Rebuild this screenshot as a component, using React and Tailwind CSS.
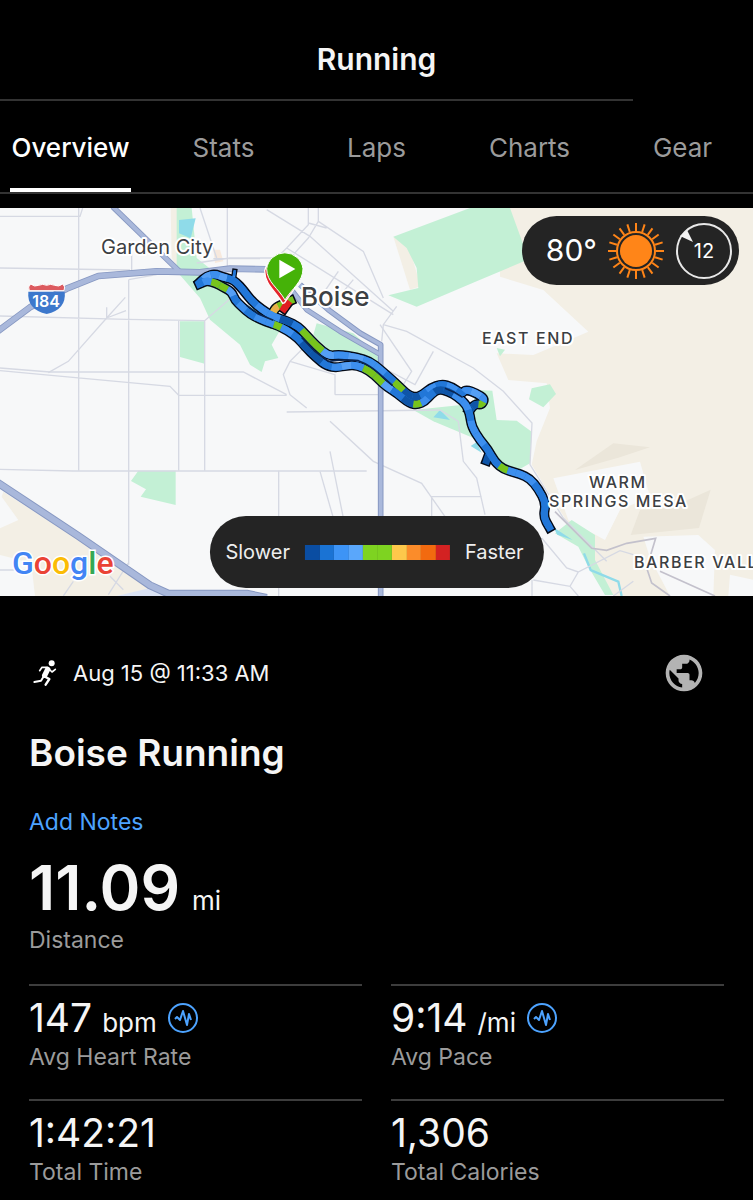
import { MdPublic } from 'react-icons/md';

const TABS = ['Overview', 'Stats', 'Laps', 'Charts', 'Gear'];

const PACE_COLORS = ['#0a4da2', '#1a73d4', '#3d94f6', '#5aa7fb', '#7ed321', '#7ed321', '#fdc84b', '#fb8c2a', '#f26a0f', '#d32222'];

const STATS = [
  { label: 'Avg Heart Rate', value: '147', unit: 'bpm', chart: true },
  { label: 'Avg Pace', value: '9:14', unit: '/mi', chart: true },
  { label: 'Total Time', value: '1:42:21' },
  { label: 'Total Calories', value: '1,306' },
];

const ROUTE_COLORS = { d: '#0f55a8', m: '#2277d8', l: '#3d8fee', s: '#559ff5', g: '#78c41c', y: '#e8b04a', r: '#e02020' };

// one letter per point, keyed to ROUTE_COLORS
const ROUTES = [
  { pace: 'gygg', points: [[814, 325], [825, 300], [845, 290], [872, 278]] },
  { pace: 'rr', points: [[862, 288], [852, 302]] },
  { pace: 'dd', points: [[1466, 742], [1460, 758]] },
  { pace: 'ml', points: [[704, 190], [700, 216]], narrow: true },
  {
    pace: 'mslsmmmmlldmggslsllmgddmlmlmlslgdd',
    points: [
      [600, 222], [620, 204], [645, 198], [670, 208], [692, 213], [708, 222], [730, 246], [755, 279], [785, 304],
      [820, 326], [860, 338], [895, 356], [915, 377], [950, 414], [985, 444], [1020, 440], [1070, 448], [1110, 460], [1140, 484],
      [1170, 510], [1195, 533], [1225, 562], [1250, 568], [1270, 558], [1292, 540], [1325, 528], [1355, 536], [1385, 558], [1397, 544],
      [1430, 556], [1454, 573], [1445, 590], [1425, 588], [1408, 608],
    ],
  },
  {
    pace: 'mlggsmlmllglmddmlslggsmdglmddllmllmmglllmmmm',
    points: [
      [598, 228], [620, 218], [648, 225], [670, 238], [695, 251], [705, 276], [725, 296], [750, 318], [780, 334], [815, 347],
      [828, 351], [860, 366], [895, 391], [915, 416], [950, 450], [980, 474], [1010, 479], [1040, 472], [1070, 471], [1110, 489],
      [1138, 516], [1160, 536], [1190, 555], [1228, 586], [1252, 590], [1275, 580], [1292, 560], [1315, 543], [1345, 550], [1375, 568],
      [1400, 591], [1410, 621], [1415, 656], [1440, 696], [1465, 726], [1485, 763], [1511, 783], [1535, 791], [1560, 798], [1590, 812],
      [1615, 842], [1638, 886], [1630, 926], [1648, 958],
    ],
  },
];

const LABELS = [
  { text: 'Garden City', x: 101, y: 46, size: 20, className: 'font-normal' },
  { text: 'Boise', x: 301, y: 98, size: 26, className: 'font-medium' },
  { text: 'EAST END', x: 482, y: 136, size: 16, className: 'font-medium tracking-widest' },
  { text: 'WARM', x: 589, y: 280, size: 16, className: 'font-medium tracking-widest' },
  { text: 'SPRINGS MESA', x: 549, y: 299, size: 16, className: 'font-medium tracking-widest' },
  { text: 'BARBER VALL', x: 634, y: 360, size: 16, className: 'font-medium tracking-widest' },
];

const mid = (a, b) => [(a[0] + b[0]) / 2, (a[1] + b[1]) / 2];

// rounds each corner: a piece runs between the midpoints on either side of a point
const toPieces = (points) =>
  points.map((point, i) => {
    const start = i === 0 ? point : mid(points[i - 1], point);
    const end = i === points.length - 1 ? point : mid(point, points[i + 1]);
    return { start, curve: `Q${point.join(' ')} ${end.join(' ')}` };
  });

const toPath = (points) => {
  const pieces = toPieces(points);
  return `M${pieces[0].start.join(' ')}` + pieces.map((p) => p.curve).join('');
};

const Route = () => (
  <g fill="none" strokeLinejoin="round">
    {ROUTES.map((route, i) => (
      <path key={i} d={toPath(route.points)} stroke="#050b18" strokeWidth={route.narrow ? 16 : 30} strokeLinecap="square" />
    ))}
    {ROUTES.map((route, i) => (
      <g key={i} strokeWidth={route.narrow ? 8 : 21}>
        <path d={toPath(route.points)} stroke={ROUTE_COLORS[route.pace[0]]} strokeLinecap="square" />
        {toPieces(route.points).map((piece, j) => (
          <path key={j} d={`M${piece.start.join(' ')}${piece.curve}`} stroke={ROUTE_COLORS[route.pace[j]]} />
        ))}
      </g>
    ))}
    <path
      d="M905 388L945 430L985 460Q1030 452 1075 458Q1110 471 1140 499L1178 533M1335 541Q1365 552 1388 568M740 292L775 318L820 337"
      stroke="#0a2550"
      strokeWidth="5"
    />
  </g>
);

const RouteMap = () => (
  <svg viewBox="0 0 753 388" className="block w-full h-auto" role="img" aria-label="Route map">
    <rect width="753" height="388" fill="#f7f8f9" />
    <g transform="scale(0.333333)">
      {/* dry hills */}
      <g fill="#f3efe5">
        <path d="M1500 0H2259V1164H1840L1785 1060L1785 990L1700 940L1650 860L1595 770L1610 700L1650 600L1640 526L1525 516L1490 436L1600 441L1765 371L1630 246L1500 206Z" />
        <path d="M1180 86L1225 110L1262 235L1230 245Z" />
        <path d="M512 0H535V180L515 150Z" />
        <path d="M640 125H660L670 160L645 165Z" fill="#f7e9dd" />
        <path d="M10 851L460 1141L350 1164H105L95 1076L60 1056L0 1041V961L55 936L5 866Z" />
      </g>
      <path d="M350 1164L450 1140L500 1164Z" fill="#dbe3f4" />
      <g fill="#ebe6da">
        <path d="M1725 786L1840 706L1950 718L1860 748Z" />
        <path d="M1892 981L1920 906L2010 900L2132 845L2097 960Z" />
      </g>
      <g fill="#f7f8f9">
        <path d="M1660 811L1920 761L1950 866L1860 906L1815 996L1705 936Z" />
        <path d="M1930 986L2095 981L2145 1026L2140 1164H2010L1950 1050Z" />
        <path d="M2190 1100L2259 1115V1164H2185Z" />
      </g>

      {/* parks */}
      <g fill="#c3f0d5">
        <path d="M1180 86L1410 0H1530L1570 110L1572 160L1430 220L1250 296L1165 262L1255 240L1250 180L1220 120Z" />
        <path d="M530 0H575L590 150L640 190L720 280L800 320L850 350L815 410L835 450L795 460L785 492L750 470L720 410L630 335L600 270L530 190Z" />
        <path d="M540 340H614V467L540 447Z" />
        <path d="M950 346L1060 376L1130 440L1145 470L1000 441L940 380Z" />
        <path d="M1240 606L1390 590L1420 690L1300 640Z" />
        <path d="M1430 546L1477 548L1490 636L1550 638L1595 671L1590 766L1560 783L1500 765L1440 680L1410 620Z" />
        <path d="M1595 541L1650 529L1668 558L1630 598L1587 574Z" />
        <path d="M1490 420L1515 425L1500 445Z" />
        <path d="M415 788H527V891L422 866L438 844L393 819Z" />
        <path d="M1715 936L1785 981V1056L1840 1161H1815L1765 1076L1735 1016L1665 976Z" />
      </g>
      <g fill="#8fdbe9">
        <path d="M537 36L587 31L572 91L537 76Z" />
        <path d="M1320 606L1350 636L1300 628Z" />
        <path d="M1412 714L1430 702L1445 734Z" />
        <path d="M1660 958L1718 996L1672 980Z" />
      </g>
      <path d="M1752 1036L1772 1086L1855 1121L1865 1164" fill="none" stroke="#8fdbe9" strokeWidth="7" />

      {/* streets */}
      <g fill="none" stroke="#d6d9e3" strokeWidth="4">
        <path d="M0 25H240L248 0M236 0V788M386 215V1070M0 180L390 186M0 324L380 334L614 338M0 480L150 492H730L860 560M0 488L510 535L536 562H860M536 338V788M614 338V788M614 338L690 272M386 215L470 200M682 0V180M600 0L650 150M395 188V130" />
        <path d="M0 784L220 789H1100M145 494L205 460L320 330L376 268M320 330L378 308M320 330V298" />
        <path d="M590 165L690 150H860M640 152H780M925 0V50L860 120L790 190M955 0V40L925 90L880 140M800 5L930 85L1180 310M955 40L1090 130L1150 270M925 45L980 60M860 120L1180 320M1015 190L960 270M1060 215L980 310M1190 295L1150 350L1145 400M1150 350L1220 370L1420 480L1510 550L1596 645L1590 770L1690 930L1820 1060" />
        <path d="M870 560L850 500L870 460L940 390M870 560L920 600M1005 560V500L870 460M1140 350L1235 490L1210 530M1300 430L1245 530L1150 480M860 612L1320 606L1375 640L1390 760L1430 810L1455 920M990 640L1120 760L1265 826L1345 940M1295 940V866H1445M990 730L1030 930M960 790L1000 930M1005 560H1140M836 788V1164" />
        <path d="M1600 1116L1710 1135L1735 1092L1860 1028L1900 1040M1710 1135L1735 1164M1596 1164V1116M1625 990L1700 1080L1735 1092M1840 1164L1900 1120M190 1164L220 1120M385 1065L325 1160M0 1086H100M330 1105L370 1145" />
      </g>
      <path d="M1665 911L1775 1021L1820 1027L1880 1006L1967 991L1940 1080L1955 1125L2010 1164M1980 1090L2145 1164" fill="none" stroke="#c3c1cc" strokeWidth="5" />

      {/* highways, dark edge first and lighter fill over it */}
      {[['#8798c2', 1], ['#a9b8db', 0]].map(([color, edge]) => (
        <g key={color} fill="none" stroke={color} strokeLinejoin="round">
          <path d="M-10 372L90 298L200 242L295 204L470 190L600 193L690 182L800 184" strokeWidth={edge ? 20 : 15} />
          <path d="M800 184L870 240L920 305L1020 370L1138 438" strokeWidth={edge ? 16 : 11} />
          <path d="M900 230L985 305L1080 375L1142 410V1164" strokeWidth={edge ? 17 : 11} />
          <path d="M338 -4L540 192" strokeWidth={edge ? 17 : 12} />
          <path d="M-10 822L235 984L450 1132L505 1157H740L800 1170" strokeWidth={edge ? 24 : 18} />
        </g>
      ))}

      {/* interstate shield */}
      <path d="M88 248Q82 236 92 228Q104 238 116 232Q128 226 140 232Q152 226 164 232Q176 238 188 228Q198 236 192 248Z" fill="#dc5a5f" stroke="#fff" strokeWidth="3" />
      <path d="M85 251H194Q200 304 140 318Q80 304 85 251Z" fill="#3d78cc" />

      <Route />

      {/* finish and start pins */}
      <path d="M848 286C828 250 794 230 794 188A56 56 0 0 1 902 186C902 230 866 262 854 284Z" fill="#e3262d" stroke="#fff" strokeWidth="4" />
      <path d="M855 276C835 240 800 222 800 182A55 55 0 0 1 909 182C909 222 875 242 855 276Z" fill="#45b208" stroke="#fff" strokeWidth="3" />
      <path d="M838 155L886 183L838 211Z" fill="#fff" />
    </g>

    <text x="46" y="99" textAnchor="middle" fontSize="16" fill="#fff" className="font-semibold">184</text>
    {LABELS.map((label) => (
      <text
        key={label.text}
        x={label.x}
        y={label.y}
        fontSize={label.size}
        fill="#3c4043"
        stroke="#fff"
        strokeWidth="4"
        strokeLinejoin="round"
        paintOrder="stroke"
        className={label.className}
      >
        {label.text}
      </text>
    ))}
    <text x="12" y="366" fontSize="32" stroke="#fff" strokeWidth="3" paintOrder="stroke" className="font-[Roboto] font-medium">
      <tspan fill="#4285f4">G</tspan>
      <tspan fill="#ea4335">o</tspan>
      <tspan fill="#fbbc05">o</tspan>
      <tspan fill="#4285f4">g</tspan>
      <tspan fill="#34a853">l</tspan>
      <tspan fill="#ea4335">e</tspan>
    </text>
  </svg>
);

const SunIcon = () => (
  <svg viewBox="0 0 58 58" className="size-[58px]" aria-hidden="true">
    <circle cx="29" cy="29" r="16" fill="#ff8518" />
    <circle cx="29" cy="29" r="19" fill="none" stroke="#ff8518" strokeWidth="2" />
    {Array.from({ length: 20 }, (_, i) => (
      <path key={i} d="M29 1V9" stroke="#ff8518" strokeWidth="2" transform={`rotate(${i * 18} 29 29)`} />
    ))}
  </svg>
);

const Weather = () => (
  <div className="absolute top-2 right-3.5 h-[69px] pl-6 pr-1.5 flex items-center rounded-full bg-[#242424] text-white">
    <span className="text-[30px]">80°</span>
    <span className="ml-2.5 mr-2.5"><SunIcon /></span>
    <div className="relative size-[58px] flex items-center justify-center">
      <svg viewBox="0 0 58 58" className="absolute inset-0" aria-hidden="true">
        <circle cx="29" cy="29" r="27" fill="none" stroke="#e8e8e8" strokeWidth="2" />
        <path d="M5 14L12 8L18 20Z" fill="#f2f2f2" />
      </svg>
      <span className="text-[20px]">12</span>
    </div>
  </div>
);

const PaceLegend = () => (
  <div className="absolute bottom-2 left-1/2 -translate-x-1/2 h-[72px] px-4 flex items-center gap-[15px] rounded-full bg-[#242424] text-[#eeeeee] text-[20px]">
    <span>Slower</span>
    <div className="flex w-[145px] h-[15px]">
      {PACE_COLORS.map((color, i) => (
        <div key={i} className="flex-1" style={{ backgroundColor: color }} />
      ))}
    </div>
    <span className="pr-1">Faster</span>
  </div>
);

const RunnerIcon = () => (
  <svg viewBox="0 0 72 78" className="w-6 h-[26px]" fill="none" stroke="#fff" strokeWidth="6" strokeLinejoin="round" strokeLinecap="round" aria-hidden="true">
    <circle cx="56" cy="10" r="9" fill="#fff" stroke="none" />
    <path d="M44 28L35 46" strokeWidth="16" />
    <path d="M42 22L27 22L20 32M48 27L57 36L67 28" strokeWidth="5" />
    <path d="M36 50L49 57L38 74" strokeWidth="7" />
    <path d="M31 51L24 62L4 66" />
  </svg>
);

const ChartIcon = () => (
  <svg viewBox="0 0 32 32" className="size-8" fill="none" stroke="#4da3ff" aria-hidden="true">
    <circle cx="16" cy="16" r="14" strokeWidth="2" />
    <path d="M8 17L10 15L13 18L16 9L20 23L22 12L24 18" strokeWidth="2" strokeLinejoin="round" />
  </svg>
);

const Stat = ({ label, value, unit, chart }) => (
  <div className="h-[115px] border-t-2 border-[#3d3d3d] pt-3">
    <div className="h-10 flex items-center">
      <div className="flex items-baseline gap-2.5">
        <span className="text-[39px] leading-10">{value}</span>
        {unit && <span className="text-[26px] leading-8">{unit}</span>}
      </div>
      {chart && (
        <button type="button" className="ml-2.5" aria-label={`${label} chart`}>
          <ChartIcon />
        </button>
      )}
    </div>
    <p className="mt-[5px] text-[23px] leading-7 text-[#9b9b9b]">{label}</p>
  </div>
);

export default function App() {
  return (
    <div className="min-h-screen overflow-x-hidden bg-black font-['Inter',sans-serif] text-[#f5f5f5]">
      <header className="h-[99px] pt-5 flex items-center justify-center">
        <h1 className="text-[30px] font-semibold">Running</h1>
      </header>
      <div className="w-[84%] h-0.5 bg-[#333333]" />

      <nav className="h-[93px] border-b-2 border-[#333333]">
        <div className="-mx-1.5 h-full grid grid-cols-5">
          {TABS.map((tab, i) => (
            <div key={tab} className="flex justify-center">
              <button
                type="button"
                className={
                  i === 0
                    ? 'h-full px-px pt-1.5 border-b-4 border-white text-[26px] font-medium text-white'
                    : 'h-full px-px pt-1.5 border-b-4 border-transparent text-[26px] text-[#9b9b9b]'
                }
              >
                {tab}
              </button>
            </div>
          ))}
        </div>
      </nav>

      <div className="relative mt-3.5">
        <RouteMap />
        <Weather />
        <PaceLegend />
      </div>

      <main className="px-[29px] pt-[55px]">
        <div className="flex items-center">
          <span className="ml-1"><RunnerIcon /></span>
          <span className="ml-4 text-[22px]">Aug 15 @ 11:33 AM</span>
          <button type="button" className="ml-auto mr-[18px]" aria-label="Privacy">
            <MdPublic className="size-11 text-[#b3b3b3]" />
          </button>
        </div>

        <h2 className="mt-9 text-[37px] leading-11 font-semibold">Boise Running</h2>
        <button type="button" className="mt-[31px] block text-[23px] leading-8 text-[#4da3ff]">Add Notes</button>

        <div className="mt-5 flex items-baseline gap-3">
          <span className="text-[62px] leading-[60px] font-semibold">11.09</span>
          <span className="text-[26px] leading-8">mi</span>
        </div>
        <p className="mt-1.5 text-[23px] leading-8 text-[#9b9b9b]">Distance</p>

        <div className="mt-7 grid grid-cols-2 gap-x-[29px]">
          {STATS.map((stat) => (
            <Stat key={stat.label} {...stat} />
          ))}
        </div>
      </main>
    </div>
  );
}
